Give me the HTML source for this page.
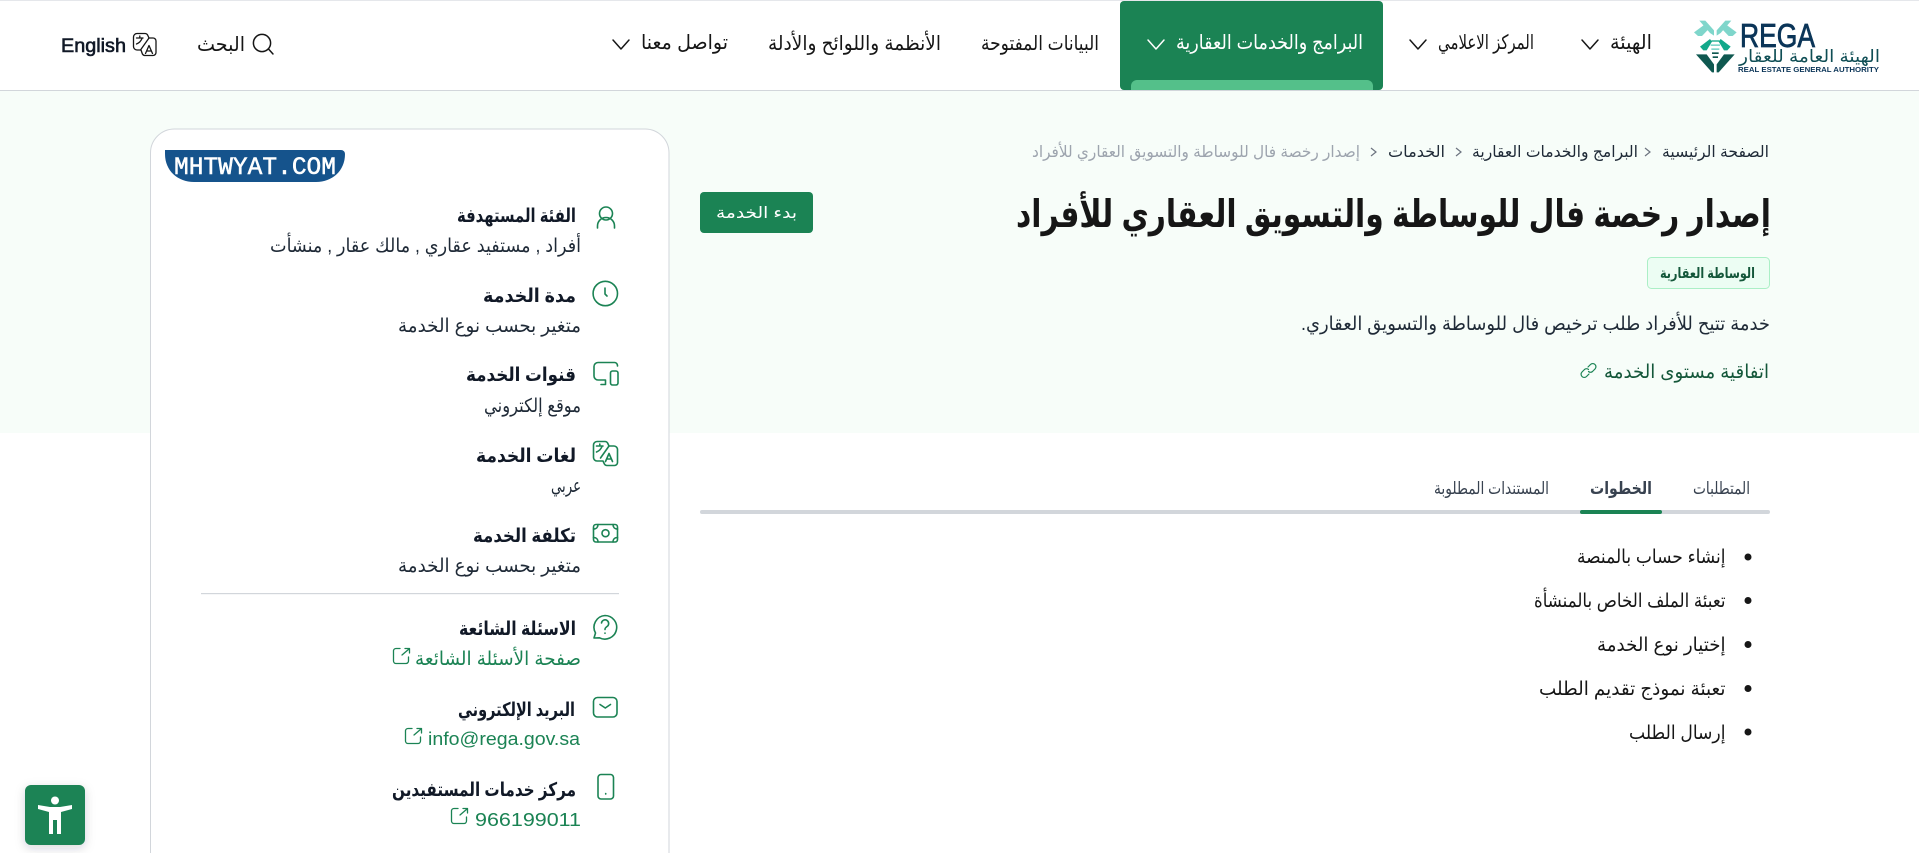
<!DOCTYPE html>
<html lang="ar" dir="rtl">
<head>
<meta charset="utf-8">
<title>إصدار رخصة فال للوساطة والتسويق العقاري للأفراد</title>
<style>
html,body{margin:0;padding:0;width:1919px;height:853px;overflow:hidden;background:#fff}
svg{display:block;position:absolute;left:0;top:0}
text{font-family:"Liberation Sans","DejaVu Sans","Noto Sans CJK SC",sans-serif;direction:rtl;text-anchor:start}
.l{direction:ltr;text-anchor:start}
.nav{font-size:20px;fill:#161616}
.bc{font-size:16px;fill:#1f2a37}
.t{font-size:19px;font-weight:700;fill:#111927}
.v{font-size:19px;fill:#1f2a37}
.g{font-size:19px;fill:#1b8354}
.li{font-size:19px;fill:#161616}
.tb{font-size:17px;fill:#384250}
.ic{fill:none;stroke:#1b8354;stroke-width:1.6;stroke-linecap:round;stroke-linejoin:round}
.dk{fill:none;stroke:#161616;stroke-width:1.5;stroke-linecap:round;stroke-linejoin:round}
</style>
</head>
<body>
<svg width="1919" height="853" viewBox="0 0 1919 853" xmlns="http://www.w3.org/2000/svg">
<defs><filter id="sh" x="-30%" y="-30%" width="160%" height="160%"><feDropShadow dx="0" dy="3" stdDeviation="5" flood-color="#1f2a37" flood-opacity=".18"/></filter></defs>
<!-- header -->
<rect x="0" y="0" width="1919" height="1" fill="#e5e7eb"/>
<rect x="0" y="90" width="1919" height="343" fill="#f7fdf9"/>
<rect x="0" y="90" width="1919" height="1" fill="#d2d6db"/>
<path d="M1124 1H1379a4 4 0 0 1 4 4V86a4 4 0 0 1-4 4H1124a4 4 0 0 1-4-4V5a4 4 0 0 1 4-4Z" fill="#1b8354"/>
<path d="M1131 90V86a6 6 0 0 1 6-6H1367a6 6 0 0 1 6 6V90Z" fill="#54c08a"/>

<!-- logo -->
<g transform="translate(1690 15) scale(.3333)">
<g fill="#7fd6cb">
<path d="M28 17H46L72 46V62L60 54Z"/><path d="M12 52L42 30L55 43L36 63H24Z"/>
<path d="M124 17H106L80 46V62L92 54Z"/><path d="M140 52L110 30L97 43L116 63H128Z"/>
</g>
<g fill="#12a88a">
<path d="M30 95L60 72L66 80L50 106H40Z"/><path d="M122 95L92 72L86 80L102 106H112Z"/>
<rect x="64" y="76" width="24" height="4"/>
</g>
<g fill="#7fd6cb"><rect x="62" y="88" width="28" height="5"/><rect x="64" y="100" width="24" height="5"/></g>
<g fill="#0f5850"><rect x="66" y="112" width="20" height="5"/><rect x="68" y="124" width="16" height="5"/>
<path d="M18 118H50L72 148V172H66Z"/><path d="M134 118H102L80 148V172H86Z"/></g>
</g>
<text class="l" x="1740" y="47" font-size="33" fill="#0b3558" stroke="#0b3558" stroke-width=".8" textLength="75" lengthAdjust="spacingAndGlyphs">REGA</text>
<text x="1880" y="62" font-size="17" fill="#0f4e55" textLength="141" lengthAdjust="spacingAndGlyphs">الهيئة العامة للعقار</text>
<text class="l" x="1738" y="72" font-size="7.5" font-weight="700" fill="#0b3558" textLength="141" lengthAdjust="spacingAndGlyphs">REAL ESTATE GENERAL AUTHORITY</text>

<!-- nav -->
<text class="nav" x="1652" y="49" textLength="42" lengthAdjust="spacingAndGlyphs">الهيئة</text>
<polyline class="dk" points="1582,40 1590,49 1598,40"/>
<text class="nav" x="1534" y="49" textLength="96" lengthAdjust="spacingAndGlyphs">المركز الاعلامي</text>
<polyline class="dk" points="1410,40 1418,49 1426,40"/>
<text class="nav" x="1363" y="49" style="fill:#fff" textLength="187" lengthAdjust="spacingAndGlyphs">البرامج والخدمات العقارية</text>
<polyline class="dk" style="stroke:#fff" points="1148,40 1156,49 1164,40"/>
<text class="nav" x="1099" y="50" textLength="118" lengthAdjust="spacingAndGlyphs">البيانات المفتوحة</text>
<text class="nav" x="941" y="50" textLength="173" lengthAdjust="spacingAndGlyphs">الأنظمة واللوائح والأدلة</text>
<text class="nav" x="728" y="49" textLength="87" lengthAdjust="spacingAndGlyphs">تواصل معنا</text>
<polyline class="dk" points="613,40 621,49 629,40"/>
<circle class="dk" cx="262" cy="43" r="8.6"/><line class="dk" x1="268.500" y1="49" x2="273" y2="54"/>
<text class="nav" x="245" y="51" textLength="48" lengthAdjust="spacingAndGlyphs">البحث</text>
<g class="dk" style="stroke-width:1.3">
<path d="M137 33.500H145a3 3 0 0 1 2.600 1.500L149 38H153a3 3 0 0 1 3 3V52.500a3 3 0 0 1-3 3H145a3 3 0 0 1-2.600-1.500L141 50H137a3.500 3.500 0 0 1-3.500-3.500V37a3.500 3.500 0 0 1 3.500-3.500Z"/>
<path d="M149 38L140.500 50"/>
<path d="M136.500 38H143M139.800 36V38M142 38.500C141 41 139 43 136.500 44"/>
<path d="M145.500 53.500L149 45.500L152.500 53.500M146.800 51H151.200"/>
</g>
<text class="l" x="61" y="52" font-size="19" fill="#111927" stroke="#111927" stroke-width=".6" textLength="65" lengthAdjust="spacingAndGlyphs">English</text>

<!-- card -->
<path d="M150.500 853V153a24 24 0 0 1 24-24H645a24 24 0 0 1 24 24V853" fill="#fff" stroke="#d2d6db"/>
<path d="M165 150H341a4 4 0 0 1 4 4C345 171 332 182 316 182H194C178 182 165 171 165 154Z" fill="#15538c"/>
<text class="l" x="174" y="174" font-size="25" fill="#fff" stroke="#fff" stroke-width=".5" style="font-family:'Liberation Mono',monospace" textLength="162" lengthAdjust="spacingAndGlyphs">MHTWYAT.COM</text>

<g class="ic">
<circle cx="606" cy="213.500" r="6.500"/><path d="M597.500 228V226a8.500 8.500 0 0 1 17 0V228"/>
<circle cx="605.300" cy="293.500" r="12.200"/><path d="M605 288V294L607 296"/>
<path d="M617.500 366V365.500a3 3 0 0 0-3-3H598a4 4 0 0 0-4 4V376a4 4 0 0 0 4 4H605.500V384.500H601"/><rect x="610.500" y="371" width="7.500" height="14" rx="2"/>
<path d="M597 441.500H605a3 3 0 0 1 2.600 1.500L609 446H614a3.500 3.500 0 0 1 3.500 3.500V462.500a3 3 0 0 1-3 3H607a3 3 0 0 1-2.600-1.500L603 461H597a3.500 3.500 0 0 1-3.500-3.500V445a3.500 3.500 0 0 1 3.500-3.500Z"/>
<path d="M609 446L600.500 458"/>
<path d="M596.500 446H603M599.800 444V446M602 446.500C601 449 599 451 596.500 452"/>
<path d="M605.500 461.500L609 453.500L612.500 461.500M606.800 459H611.200"/>
<rect x="593.500" y="524.500" width="24" height="17.500" rx="2.500"/><circle cx="605.500" cy="533.200" r="3.500"/><path d="M593.500 529C596.500 529 598 527 598 524.500M617.500 529C614.500 529 613 527 613 524.500M593.500 537.500C596.500 537.500 598 539.500 598 542M617.500 537.500C614.500 537.500 613 539.500 613 542"/>
<path d="M605 615.500a11.800 11.800 0 1 1-5.500 22.300L594 638L595.500 633a11.800 11.800 0 0 1 9.500-17.500Z"/><path d="M601.500 623a3.600 3.600 0 1 1 5.500 3.500C605.800 627.300 605 628 605 629.500"/><path d="M605 633V633.300"/>
<rect x="593.500" y="697.500" width="23.500" height="19.500" rx="4"/><path d="M600 704.500L605.300 708L610.500 704.500"/>
<rect x="598" y="774.500" width="15.500" height="24.500" rx="3"/><path d="M605.700 793.500V794"/>
</g>
<rect x="201" y="593" width="418" height="1.200" fill="#d2d6db"/>

<text class="t" x="576" y="222" textLength="119" lengthAdjust="spacingAndGlyphs">الفئة المستهدفة</text>
<text class="v" x="581" y="252" textLength="311" lengthAdjust="spacingAndGlyphs">أفراد , مستفيد عقاري , مالك عقار , منشأت</text>
<text class="t" x="576" y="302" textLength="93" lengthAdjust="spacingAndGlyphs">مدة الخدمة</text>
<text class="v" x="581" y="332" textLength="183" lengthAdjust="spacingAndGlyphs">متغير بحسب نوع الخدمة</text>
<text class="t" x="576" y="381" textLength="110" lengthAdjust="spacingAndGlyphs">قنوات الخدمة</text>
<text class="v" x="581" y="412" textLength="97" lengthAdjust="spacingAndGlyphs">موقع إلكتروني</text>
<text class="t" x="576" y="462" textLength="100" lengthAdjust="spacingAndGlyphs">لغات الخدمة</text>
<text class="v" x="581" y="492" textLength="30" lengthAdjust="spacingAndGlyphs">عربي</text>
<text class="t" x="576" y="542" textLength="103" lengthAdjust="spacingAndGlyphs">تكلفة الخدمة</text>
<text class="v" x="581" y="572" textLength="183" lengthAdjust="spacingAndGlyphs">متغير بحسب نوع الخدمة</text>
<text class="t" x="576" y="635" textLength="117" lengthAdjust="spacingAndGlyphs">الاسئلة الشائعة</text>
<text class="g" x="581" y="665" textLength="166" lengthAdjust="spacingAndGlyphs">صفحة الأسئلة الشائعة</text>
<text class="t" x="575" y="716" textLength="117" lengthAdjust="spacingAndGlyphs">البريد الإلكتروني</text>
<text class="g l" x="428" y="745" style="font-size:18.500px" textLength="152" lengthAdjust="spacingAndGlyphs">info@rega.gov.sa</text>
<text class="t" x="576" y="796" textLength="184" lengthAdjust="spacingAndGlyphs">مركز خدمات المستفيدين</text>
<text class="g l" x="475" y="826" style="font-size:18.500px" textLength="106" lengthAdjust="spacingAndGlyphs">966199011</text>

<g class="ic" style="stroke-width:1.3">
<path d="M400 648.500H396a2.500 2.500 0 0 0-2.500 2.500V661a2.500 2.500 0 0 0 2.500 2.500H406a2.500 2.500 0 0 0 2.500-2.500V657M402 655L409 649M405 648.500H409.500V653"/>
<path d="M412 728.500H408a2.500 2.500 0 0 0-2.500 2.500V741a2.500 2.500 0 0 0 2.500 2.500H418a2.500 2.500 0 0 0 2.500-2.500V737M414 735L421 729M417 728.500H421.500V733"/>
<path d="M458 808.500H454a2.500 2.500 0 0 0-2.500 2.500V821a2.500 2.500 0 0 0 2.500 2.500H464a2.500 2.500 0 0 0 2.500-2.500V817M460 815L467 809M463 808.500H467.500V813"/>
</g>

<!-- breadcrumb -->
<text class="bc" x="1769" y="157" textLength="107" lengthAdjust="spacingAndGlyphs">الصفحة الرئيسية</text>
<polyline points="1645,148 1650,152 1645,156" fill="none" stroke="#6c737f" stroke-width="1.200"/>
<text class="bc" x="1638" y="157" textLength="166" lengthAdjust="spacingAndGlyphs">البرامج والخدمات العقارية</text>
<polyline points="1456,148 1461,152 1456,156" fill="none" stroke="#6c737f" stroke-width="1.200"/>
<text class="bc" x="1445" y="157" textLength="57" lengthAdjust="spacingAndGlyphs">الخدمات</text>
<polyline points="1371,148 1376,152 1371,156" fill="none" stroke="#6c737f" stroke-width="1.200"/>
<text class="bc" x="1360" y="157" style="fill:#9da4ae" textLength="328" lengthAdjust="spacingAndGlyphs">إصدار رخصة فال للوساطة والتسويق العقاري للأفراد</text>

<!-- title & actions -->
<text x="1771" y="227" font-size="38" font-weight="700" fill="#161616" textLength="755" lengthAdjust="spacingAndGlyphs">إصدار رخصة فال للوساطة والتسويق العقاري للأفراد</text>
<rect x="700" y="192" width="113" height="41" rx="4" fill="#1b8354"/>
<text x="797" y="218" font-size="16" fill="#fff" textLength="81" lengthAdjust="spacingAndGlyphs">بدء الخدمة</text>
<rect x="1647.500" y="257.500" width="122" height="31" rx="4" fill="#ecfdf3" stroke="#abefc6"/>
<text x="1755" y="278" font-size="14.500" font-weight="700" fill="#14573a" textLength="95" lengthAdjust="spacingAndGlyphs">الوساطة العقارية</text>
<text x="1770" y="330" font-size="19" fill="#1f2a37" textLength="469" lengthAdjust="spacingAndGlyphs">خدمة تتيح للأفراد طلب ترخيص فال للوساطة والتسويق العقاري.</text>
<text x="1769" y="378" font-size="19" fill="#14573a" textLength="165" lengthAdjust="spacingAndGlyphs">اتفاقية مستوى الخدمة</text>
<g fill="none" stroke="#1b8354" stroke-width="1.200" stroke-linecap="round">
<path d="M1588 367L1590.500 364.500a3 3 0 0 1 4.500 4.500L1592.500 371.500a3 3 0 0 1-4 0"/>
<path d="M1589 374L1586.500 376.500a3 3 0 0 1-4.500-4.500L1584.500 369.500a3 3 0 0 1 4 0"/>
</g>

<!-- tabs -->
<text class="tb" x="1750" y="494" textLength="57" lengthAdjust="spacingAndGlyphs">المتطلبات</text>
<text class="tb" x="1652" y="494" font-weight="700" textLength="62" lengthAdjust="spacingAndGlyphs">الخطوات</text>
<text class="tb" x="1549" y="494" textLength="115" lengthAdjust="spacingAndGlyphs">المستندات المطلوبة</text>
<rect x="700" y="510" width="1070" height="4" rx="2" fill="#d2d6db"/>
<rect x="1580" y="510" width="82" height="4" rx="2" fill="#1b8354"/>

<!-- list -->
<g fill="#161616">
<circle cx="1748" cy="557" r="3.500"/><circle cx="1748" cy="600.500" r="3.500"/><circle cx="1748" cy="644.500" r="3.500"/><circle cx="1748" cy="688.500" r="3.500"/><circle cx="1748" cy="732" r="3.500"/>
</g>
<text class="li" x="1725.500" y="563" textLength="148.500" lengthAdjust="spacingAndGlyphs">إنشاء حساب بالمنصة</text>
<text class="li" x="1725.500" y="607" textLength="191.500" lengthAdjust="spacingAndGlyphs">تعبئة الملف الخاص بالمنشأة</text>
<text class="li" x="1725.500" y="651" textLength="128.500" lengthAdjust="spacingAndGlyphs">إختيار نوع الخدمة</text>
<text class="li" x="1725.500" y="695" textLength="186.500" lengthAdjust="spacingAndGlyphs">تعبئة نموذج تقديم الطلب</text>
<text class="li" x="1725.500" y="739" textLength="96.500" lengthAdjust="spacingAndGlyphs">إرسال الطلب</text>

<!-- accessibility -->
<rect x="25" y="785" width="60" height="60" rx="6" fill="#1b8354" filter="url(#sh)"/>
<circle cx="55" cy="800.500" r="4" fill="#fff"/>
<path d="M38 805L50 807H60L72 805V809L61 812V834H57V820H53V834H49V812L38 809Z" fill="#fff"/>
</svg>
</body>
</html>
